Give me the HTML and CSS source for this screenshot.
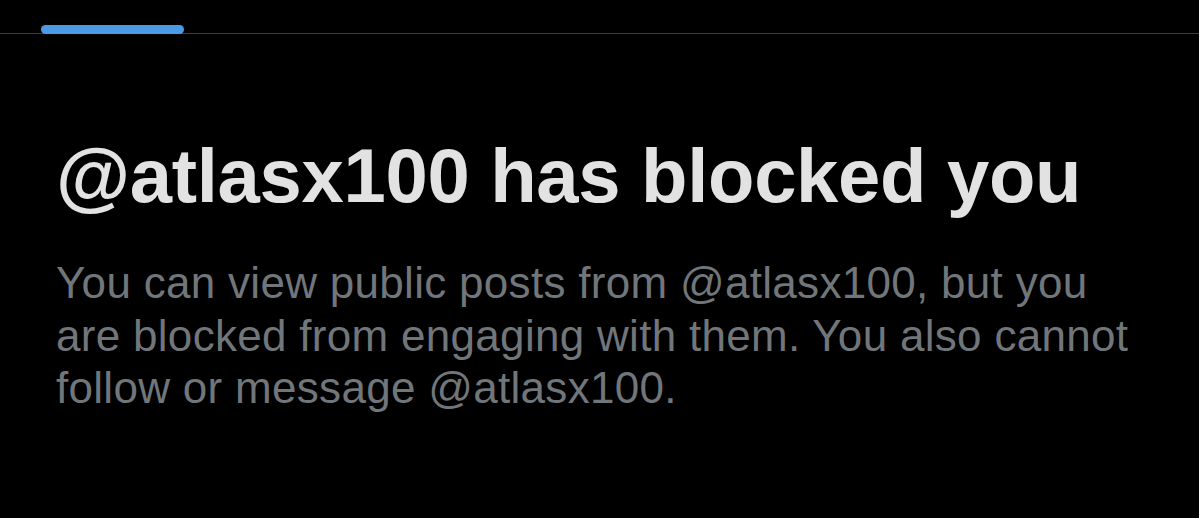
FILE: index.html
```html
<!DOCTYPE html>
<html>
<head>
<meta charset="utf-8">
<link rel="stylesheet" href="styles.css">
</head>
<body>
<div class="tabs"><div class="indicator"></div></div>
<main class="content">
<h1 class="title">@atlasx100 has blocked you</h1>
<p class="desc">You can view public posts from @atlasx100, but you are blocked from engaging with them. You also cannot follow or message @atlasx100.</p>
</main>
</body>
</html>
```

FILE: styles.css
```css
html, body {
  margin: 0;
  background: #000;
  height: 100%;
}
body {
  font-family: "Liberation Sans", Arial, sans-serif;
}
.tabs {
  display: flex;
  align-items: flex-end;
  height: 33px;
  padding-left: 41px;
  border-bottom: 1px solid #3a3d40;
}
.indicator {
  width: 143px;
  height: 9px;
  border-radius: 5px;
  background: #4b9ae8;
  margin-bottom: -1px;
}
.content {
  padding: 0 40px 0 56px;
}
.title {
  margin: 104px 0 0;
  font-size: 76px;
  font-weight: 700;
  color: #e2e2e2;
  line-height: 1;
  letter-spacing: -0.3px;
}
.desc {
  margin: 43px 0 0;
  font-size: 44px;
  line-height: 52.5px;
  letter-spacing: 0.3px;
  color: #71767b;
  width: 1100px;
}
```
